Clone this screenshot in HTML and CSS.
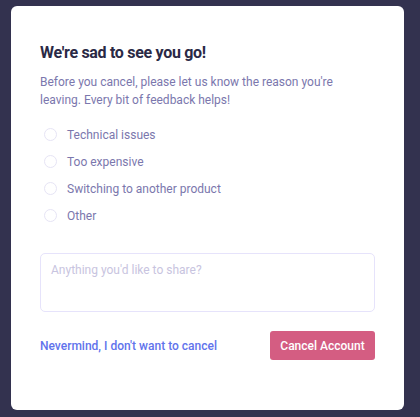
FILE: index.html
```html
<!DOCTYPE html>
<html>
<head>
<meta charset="utf-8">
<link rel="stylesheet" href="styles.css">
</head>
<body>
<div class="modal">
  <h1 class="title">We're sad to see you go!</h1>
  <p class="intro">Before you cancel, please let us know the reason you're leaving. Every bit of feedback helps!</p>
  <ul class="reasons">
    <li class="reason"><span class="radio"></span><span>Technical issues</span></li>
    <li class="reason"><span class="radio"></span><span>Too expensive</span></li>
    <li class="reason"><span class="radio"></span><span>Switching to another product</span></li>
    <li class="reason"><span class="radio"></span><span>Other</span></li>
  </ul>
  <div class="share">Anything you'd like to share?</div>
  <div class="actions">
    <a class="never">Nevermind, I don't want to cancel</a>
    <button class="cancel">Cancel Account</button>
  </div>
</div>
</body>
</html>
```
FILE: styles.css
```css
html, body { margin: 0; padding: 0; }
body {
  background: #33324f;
  width: 420px;
  height: 417px;
  font-family: Roboto, "Noto Sans", sans-serif;
  padding: 6px 16px 7px 11px;
  box-sizing: border-box;
}
.modal {
  background: #ffffff;
  border-radius: 6px;
  height: 404px;
  box-sizing: border-box;
  padding: 36px 29px 0 29px;
}
.title {
  margin: 0;
  font-size: 16px;
  font-weight: 700;
  letter-spacing: -0.3px;
  color: #2a2945;
  line-height: 22px;
}
.intro {
  margin: 9px 0 0 0;
  font-size: 12px;
  line-height: 18px;
  color: #7b77ad;
}
.reasons {
  list-style: none;
  margin: 12px 0 0 0;
  padding: 0;
}
.reason {
  display: flex;
  align-items: center;
  height: 27px;
  font-size: 12px;
  color: #7b77ad;
}
.radio {
  width: 11px;
  height: 11px;
  border: 1px solid #e6e4f5;
  border-radius: 50%;
  margin: 0 10px 0 4px;
}
.share {
  margin-top: 24px;
  height: 59px;
  border: 1px solid #e6e3fb;
  border-radius: 5px;
  box-sizing: border-box;
  padding: 9px 10px;
  font-size: 12px;
  color: #c8c4e0;
}
.actions {
  display: flex;
  justify-content: space-between;
  align-items: center;
  margin-top: 19px;
}
.never {
  font-size: 12px;
  font-weight: 500;
  color: #6173ec;
}
.cancel {
  background: #d45d82;
  color: #ffffff;
  border: none;
  border-radius: 3px;
  height: 29px;
  width: 105px;
  font-family: inherit;
  font-size: 12px;
  font-weight: 500;
  padding: 0;
}
```
